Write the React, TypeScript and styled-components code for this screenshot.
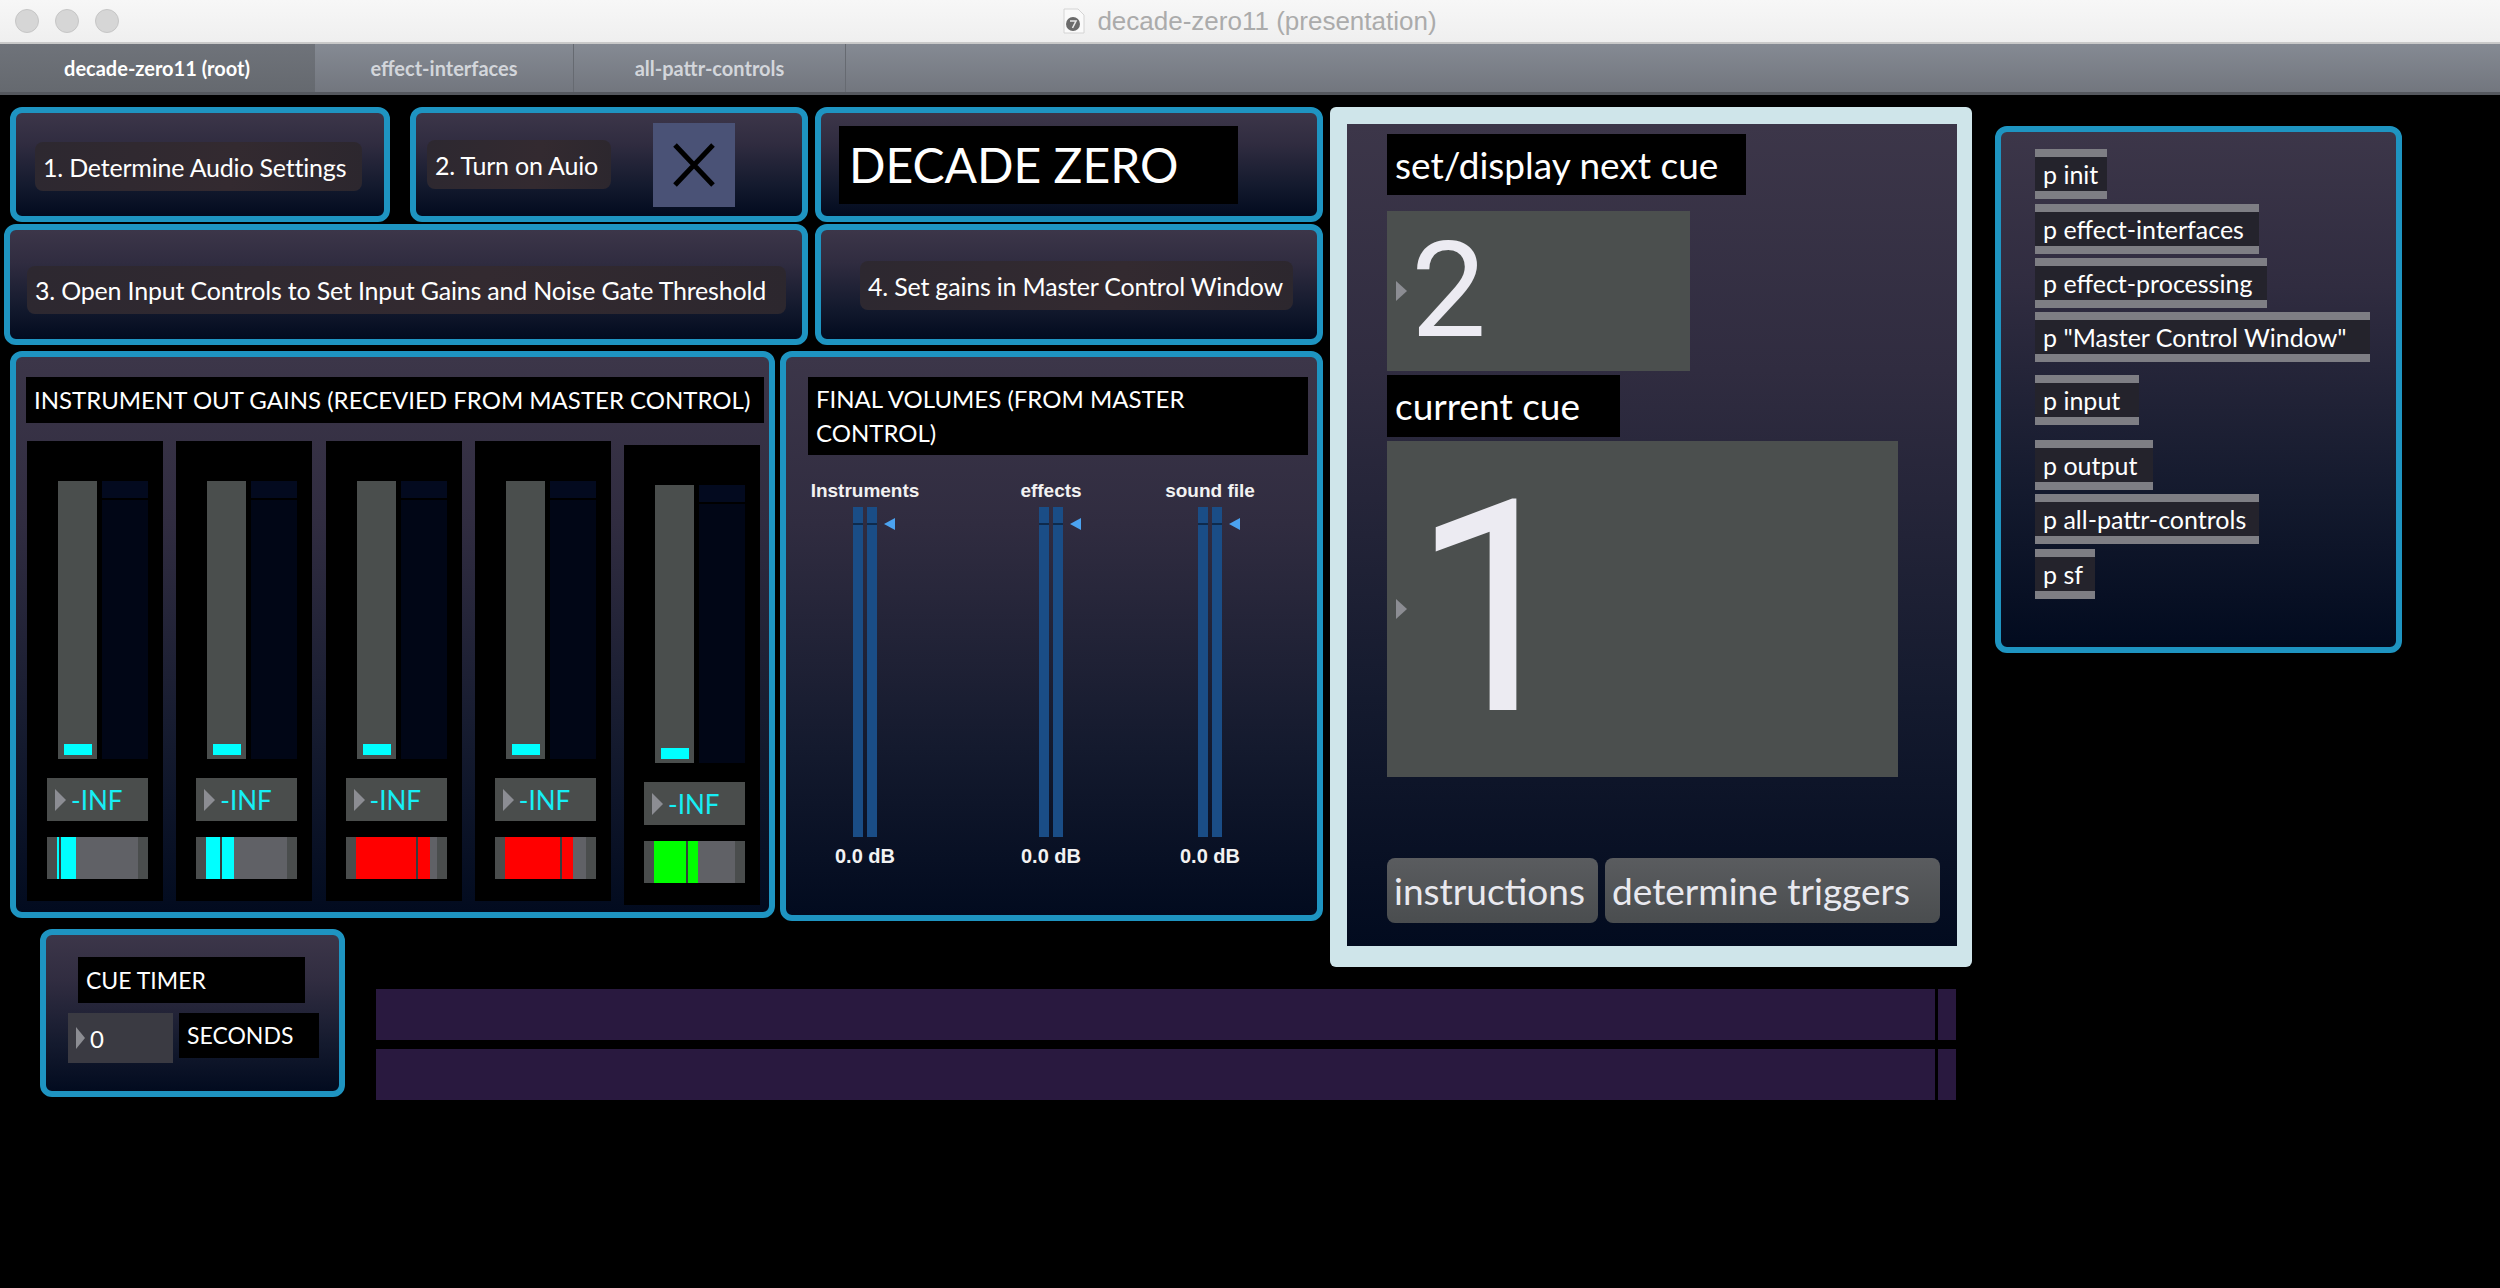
import React from 'react'
import styled, { createGlobalStyle } from 'styled-components'

const GlobalStyle = createGlobalStyle`
  html, body {
    margin: 0;
    padding: 0;
    background: #000;
  }
  body {
    font-family: 'Lato', 'Noto Sans', sans-serif;
  }
  #root {
    width: 2500px;
    height: 1288px;
    overflow: hidden;
  }
  * {
    box-sizing: border-box;
  }
`

const PANEL_BG = 'linear-gradient(180deg, #3c3649 0%, #302c40 30%, #141a2e 70%, #020b1f 100%)'
const PANEL_BORDER = '#1e94c1'

const Window = styled.div`
  width: 2500px;
  height: 1288px;
  display: flex;
  flex-direction: column;
  background: #000;
`

const TitleBar = styled.div`
  height: 44px;
  display: grid;
  grid-template-columns: 1fr auto 1fr;
  align-items: center;
  background: linear-gradient(180deg, #f7f7f7, #efefef);
  border-bottom: 2px solid #c9c9c9;
`

const Lights = styled.div`
  display: flex;
  gap: 16px;
  padding-left: 15px;
`

const Light = styled.span`
  width: 24px;
  height: 24px;
  border-radius: 50%;
  background: #d6d6d6;
  border: 1px solid #c6c6c6;
`

const WindowTitle = styled.div`
  display: flex;
  align-items: center;
  gap: 12px;
  font-family: 'Liberation Sans', Arial, sans-serif;
  font-size: 26px;
  color: #ababab;
`

const TabBar = styled.div`
  height: 51px;
  display: flex;
  background: linear-gradient(180deg, #858a93, #72767e);
  border-bottom: 3px solid #55585e;
`

const Tab = styled.div<{ $w: number; $active?: boolean }>`
  width: ${p => p.$w}px;
  display: flex;
  align-items: center;
  justify-content: center;
  font-size: 20px;
  font-weight: 700;
  color: ${p => (p.$active ? '#ffffff' : '#d3d6db')};
  background: ${p => (p.$active ? 'linear-gradient(180deg, #6f737a, #65696f)' : 'transparent')};
  border-right: 1px solid ${p => (p.$active ? 'transparent' : '#666a71')};
`

const Canvas = styled.div`
  flex: 1;
  display: grid;
  grid-template-columns: 376px 950px 650px 1fr;
  grid-template-rows: 822px auto;
  padding-top: 12px;
`

const TopLeft = styled.div`
  grid-column: 1 / 3;
  grid-row: 1;
  display: flex;
  flex-direction: column;
`

const Row = styled.div<{ $h?: number; $mt?: number }>`
  display: flex;
  align-items: flex-start;
  height: ${p => (p.$h ? `${p.$h}px` : 'auto')};
  margin-top: ${p => p.$mt ?? 0}px;
`

const Panel = styled.div<{ $w: number; $h?: number; $ml?: number; $pl?: number; $pt?: number }>`
  width: ${p => p.$w}px;
  height: ${p => (p.$h ? `${p.$h}px` : '100%')};
  margin-left: ${p => p.$ml ?? 0}px;
  padding-left: ${p => p.$pl ?? 0}px;
  padding-top: ${p => p.$pt ?? 0}px;
  border: 6px solid ${PANEL_BORDER};
  border-radius: 12px;
  background: ${PANEL_BG};
  display: flex;
  align-items: center;
`

const TextButton = styled.div<{ $w: number; $h?: number }>`
  width: ${p => p.$w}px;
  height: ${p => p.$h ?? 49}px;
  display: flex;
  align-items: center;
  padding-left: 8px;
  border-radius: 8px;
  background: linear-gradient(100deg, #2d2830 0%, #332a30 60%, #2c272e 100%);
  color: #fff;
  font-size: 25px;
  letter-spacing: -0.2px;
  white-space: nowrap;
`

const Toggle = styled.div`
  width: 82px;
  height: 84px;
  margin-left: 42px;
  background: #4a5276;
  display: flex;
  align-items: center;
  justify-content: center;
`

const TitleBox = styled.div`
  width: 399px;
  height: 78px;
  background: #000;
  color: #fff;
  font-size: 48px;
  display: flex;
  align-items: center;
  padding-left: 10px;
`

const Column = styled.div<{ $pl?: number; $pt?: number }>`
  width: 100%;
  height: 100%;
  display: flex;
  flex-direction: column;
  align-items: flex-start;
  padding-left: ${p => p.$pl ?? 0}px;
  padding-top: ${p => p.$pt ?? 0}px;
`

const Comment = styled.div<{ $w: number; $h: number; $size?: number; $ml?: number; $mt?: number }>`
  width: ${p => p.$w}px;
  height: ${p => p.$h}px;
  margin-left: ${p => p.$ml ?? 0}px;
  margin-top: ${p => p.$mt ?? 0}px;
  background: #000;
  color: #fff;
  font-size: ${p => p.$size ?? 24}px;
  line-height: 1.4;
  padding: 4px 8px;
  display: flex;
  align-items: center;
  flex-shrink: 0;
`

const StripRow = styled.div`
  width: 733px;
  margin-top: 18px;
  margin-left: 1px;
  display: flex;
  justify-content: space-between;
  align-items: flex-start;
`

const Strip = styled.div<{ $drop?: boolean }>`
  width: 136px;
  height: 460px;
  margin-top: ${p => (p.$drop ? 4 : 0)}px;
  background: #000;
  display: flex;
  flex-direction: column;
  padding-top: 40px;
`

const FaderRow = styled.div`
  display: flex;
  gap: 5px;
  padding-left: 31px;
`

const Track = styled.div`
  position: relative;
  width: 39px;
  height: 278px;
  background: #4a4e4d;
`

const Knob = styled.div`
  position: absolute;
  left: 6px;
  bottom: 4px;
  width: 28px;
  height: 11px;
  background: #00ffff;
`

const MeterWell = styled.div`
  width: 46px;
  height: 278px;
  background: #010616;
  border-top: 17px solid #030a1f;
  box-shadow: inset 0 2px 0 #000;
`

const NumBox = styled.div<{ $w: number; $h: number; $bg?: string; $ml?: number; $mt?: number; $color?: string; $size?: number }>`
  width: ${p => p.$w}px;
  height: ${p => p.$h}px;
  margin-left: ${p => p.$ml ?? 0}px;
  margin-top: ${p => p.$mt ?? 0}px;
  background: ${p => p.$bg ?? '#4a4d4c'};
  color: ${p => p.$color ?? '#fff'};
  font-size: ${p => p.$size ?? 23}px;
  display: flex;
  align-items: center;
  gap: 5px;
  padding-left: 8px;
  flex-shrink: 0;
`

const Arrow = styled.span<{ $w?: number; $h?: number }>`
  width: 0;
  height: 0;
  border-top: ${p => (p.$h ?? 22) / 2}px solid transparent;
  border-bottom: ${p => (p.$h ?? 22) / 2}px solid transparent;
  border-left: ${p => p.$w ?? 11}px solid #8c8d93;
  flex-shrink: 0;
`

const LevelBar = styled.div`
  width: 101px;
  height: 42px;
  margin-left: 20px;
  margin-top: 16px;
  background: #606166;
  border-left: 10px solid #4a4d4d;
  border-right: 10px solid #4a4d4d;
  display: flex;
`

const Fill = styled.div<{ $w: number; $c: string }>`
  width: ${p => p.$w}px;
  height: 100%;
  background: ${p => p.$c};
`

const FillLine = styled.div`
  width: 2px;
  height: 100%;
  background: rgba(40, 50, 50, 0.75);
`

const MetersRow = styled.div`
  display: grid;
  grid-template-columns: 158px 214px 104px;
  margin-top: 25px;
`

const MeterCol = styled.div`
  display: flex;
  flex-direction: column;
  align-items: center;
`

const MeterLabel = styled.div`
  font-family: 'Liberation Sans', Arial, sans-serif;
  font-weight: 700;
  font-size: 19px;
  line-height: 22px;
  color: #f2f2f2;
  white-space: nowrap;
`

const Bars = styled.div`
  position: relative;
  display: flex;
  gap: 4px;
  margin-top: 5px;
`

const Bar = styled.div`
  width: 10px;
  height: 330px;
  background: #1a4d86;
  border-top: 16px solid #1a4d86;
  box-shadow: inset 0 2px 0 #0e2a4c;
`

const Pointer = styled.span`
  position: absolute;
  left: 31px;
  top: 11px;
  width: 0;
  height: 0;
  border-top: 6px solid transparent;
  border-bottom: 6px solid transparent;
  border-right: 11px solid #4ba3f0;
`

const DbLabel = styled(MeterLabel)`
  font-size: 20px;
  margin-top: 8px;
`

const CueFrame = styled.div`
  grid-column: 3;
  grid-row: 1 / 3;
  align-self: start;
  width: 642px;
  height: 860px;
  margin-left: 4px;
  background: #cfe5ea;
  border-radius: 6px;
  padding: 17px 15px 21px 17px;
`

const CueInner = styled.div`
  width: 100%;
  height: 100%;
  background: ${PANEL_BG};
  display: flex;
  flex-direction: column;
  align-items: flex-start;
  padding: 10px 0 23px 40px;
`

const BigNum = styled.div<{ $w: number; $h: number; $mt: number; $size: number }>`
  width: ${p => p.$w}px;
  height: ${p => p.$h}px;
  margin-top: ${p => p.$mt}px;
  background: #4b4f4e;
  display: flex;
  align-items: center;
  padding-left: 9px;
  gap: 4px;
  color: #ecebf2;
  font-family: 'Roboto', 'Liberation Sans', Arial, sans-serif;
  font-size: ${p => p.$size}px;
  line-height: 1;
`

const CueButtons = styled.div`
  margin-top: auto;
  display: flex;
  gap: 7px;
`

const CueButton = styled.div<{ $w: number }>`
  width: ${p => p.$w}px;
  height: 65px;
  border-radius: 8px;
  background: linear-gradient(180deg, #5a5c5f, #4a4d4f);
  color: #e9e9ef;
  font-size: 37px;
  display: flex;
  align-items: center;
  padding-left: 7px;
  white-space: nowrap;
`

const ListPanel = styled.div`
  grid-column: 4;
  grid-row: 1;
  align-self: start;
  width: 407px;
  height: 527px;
  margin-top: 19px;
  margin-left: 19px;
  border: 6px solid ${PANEL_BORDER};
  border-radius: 12px;
  background: ${PANEL_BG};
  padding: 17px 0 0 34px;
  display: flex;
  flex-direction: column;
  align-items: flex-start;
`

const SubPatch = styled.div<{ $w: number; $mt: number }>`
  width: ${p => p.$w}px;
  height: 50px;
  margin-top: ${p => p.$mt}px;
  background: #24232c;
  border-top: 8px solid #7e7e84;
  border-bottom: 8px solid #7e7e84;
  color: #fff;
  font-size: 25px;
  display: flex;
  align-items: center;
  padding-left: 8px;
  white-space: nowrap;
  overflow: hidden;
`

const TimerPanel = styled.div`
  grid-column: 1;
  grid-row: 2;
  align-self: start;
  width: 305px;
  height: 168px;
  margin-left: 40px;
  border: 6px solid ${PANEL_BORDER};
  border-radius: 12px;
  background: ${PANEL_BG};
  padding: 22px 0 0 32px;
  display: flex;
  flex-direction: column;
  align-items: flex-start;
`

const TimerRow = styled.div`
  display: flex;
  align-items: flex-start;
  gap: 6px;
  margin-top: 10px;
  margin-left: -10px;
`

const Tracks = styled.div`
  grid-column: 2 / 4;
  grid-row: 2;
  align-self: start;
  width: 1580px;
  margin-top: 60px;
  display: flex;
  flex-direction: column;
  gap: 9px;
`

const TrackBar = styled.div`
  height: 51px;
  display: flex;
  background: #29193f;
`

const TrackMain = styled.div`
  flex: 1;
  border-right: 3px solid #000;
`

const TrackEnd = styled.div`
  width: 18px;
`

const strips = [
  { c: '#00ffff', a: 2, b: 15 },
  { c: '#00ffff', a: 14, b: 12 },
  { c: '#ff0000', a: 60, b: 12 },
  { c: '#ff0000', a: 55, b: 11 },
  { c: '#00ff00', a: 32, b: 10 },
]

const subpatches = [
  { name: 'p init', w: 72, mt: 0 },
  { name: 'p effect-interfaces', w: 224, mt: 5 },
  { name: 'p effect-processing', w: 232, mt: 4 },
  { name: 'p "Master Control Window"', w: 335, mt: 4 },
  { name: 'p input', w: 104, mt: 13 },
  { name: 'p output', w: 118, mt: 15 },
  { name: 'p all-pattr-controls', w: 224, mt: 4 },
  { name: 'p sf', w: 60, mt: 5 },
]

const meters = ['Instruments', 'effects', 'sound file']

const FileIcon = () => (
  <svg width="22" height="26" viewBox="0 0 22 26">
    <path d="M1 1h14l6 6v18H1z" fill="#fafafa" stroke="#d4d4d4" />
    <circle cx="10" cy="16" r="7" fill="#6b6b6b" />
    <path d="M7 13h6l-3.5 7" fill="none" stroke="#e8e8e8" strokeWidth="1.6" />
  </svg>
)

const Cross = () => (
  <svg width="44" height="46" viewBox="0 0 44 46">
    <path d="M3 3L41 43M41 3L3 43" stroke="#000" strokeWidth="5" />
  </svg>
)

export default function App() {
  return (
    <Window>
      <GlobalStyle />
      <TitleBar>
        <Lights>
          <Light />
          <Light />
          <Light />
        </Lights>
        <WindowTitle>
          <FileIcon />
          decade-zero11 (presentation)
        </WindowTitle>
        <div />
      </TitleBar>
      <TabBar>
        <Tab $w={315} $active>decade-zero11 (root)</Tab>
        <Tab $w={259}>effect-interfaces</Tab>
        <Tab $w={272}>all-pattr-controls</Tab>
      </TabBar>

      <Canvas>
        <TopLeft>
          <Row $h={115}>
            <Panel $w={380} $ml={10} $pl={19} $pt={4}>
              <TextButton $w={327}>1. Determine Audio Settings</TextButton>
            </Panel>
            <Panel $w={398} $ml={20} $pl={11}>
              <TextButton $w={184}>2. Turn on Auio</TextButton>
              <Toggle>
                <Cross />
              </Toggle>
            </Panel>
            <Panel $w={508} $ml={7} $pl={18}>
              <TitleBox>DECADE ZERO</TitleBox>
            </Panel>
          </Row>

          <Row $h={121} $mt={2}>
            <Panel $w={804} $ml={4} $pl={17} $pt={11}>
              <TextButton $w={759} $h={48}>3. Open Input Controls to Set Input Gains and Noise Gate Threshold</TextButton>
            </Panel>
            <Panel $w={508} $ml={7} $pl={39} $pt={2}>
              <TextButton $w={433}>4. Set gains in Master Control Window</TextButton>
            </Panel>
          </Row>

          <Row $mt={6}>
            <Panel $w={765} $h={567} $ml={10}>
              <Column $pl={10} $pt={20}>
                <Comment $w={738} $h={46} style={{ whiteSpace: 'nowrap' }}>
                  INSTRUMENT OUT GAINS (RECEVIED FROM MASTER CONTROL)
                </Comment>
                <StripRow>
                  {strips.map((s, i) => (
                    <Strip key={i} $drop={i === 4}>
                      <FaderRow>
                        <Track>
                          <Knob />
                        </Track>
                        <MeterWell />
                      </FaderRow>
                      <NumBox $w={101} $h={43} $ml={20} $mt={19} $color="#17eef5" $size={26}>
                        <Arrow />
                        -INF
                      </NumBox>
                      <LevelBar>
                        <Fill $w={s.a} $c={s.c} />
                        <FillLine />
                        <Fill $w={s.b} $c={s.c} />
                      </LevelBar>
                    </Strip>
                  ))}
                </StripRow>
              </Column>
            </Panel>
            <Panel $w={543} $h={570} $ml={5}>
              <Column $pt={20}>
                <Comment $w={500} $h={78} $ml={22}>FINAL VOLUMES (FROM MASTER CONTROL)</Comment>
                <MetersRow>
                  {meters.map(m => (
                    <MeterCol key={m}>
                      <MeterLabel>{m}</MeterLabel>
                      <Bars>
                        <Bar />
                        <Bar />
                        <Pointer />
                      </Bars>
                      <DbLabel>0.0 dB</DbLabel>
                    </MeterCol>
                  ))}
                </MetersRow>
              </Column>
            </Panel>
          </Row>
        </TopLeft>

        <CueFrame>
          <CueInner>
            <Comment $w={359} $h={61} $size={37}>set/display next cue</Comment>
            <BigNum $w={303} $h={160} $mt={16} $size={134}>
              <Arrow $w={11} $h={20} />
              <span>2</span>
            </BigNum>
            <Comment $w={233} $h={62} $size={37} $mt={4}>current cue</Comment>
            <BigNum $w={511} $h={336} $mt={4} $size={296}>
              <Arrow $w={11} $h={20} />
              <span>1</span>
            </BigNum>
            <CueButtons>
              <CueButton $w={211}>instructions</CueButton>
              <CueButton $w={335}>determine triggers</CueButton>
            </CueButtons>
          </CueInner>
        </CueFrame>

        <ListPanel>
          {subpatches.map(s => (
            <SubPatch key={s.name} $w={s.w} $mt={s.mt}>{s.name}</SubPatch>
          ))}
        </ListPanel>

        <TimerPanel>
          <Comment $w={227} $h={46} $size={23}>CUE TIMER</Comment>
          <TimerRow>
            <NumBox $w={105} $h={50} $bg="#3a3a42" $size={24}>
              <Arrow $w={9} $h={22} />
              0
            </NumBox>
            <Comment $w={140} $h={45} $size={23}>SECONDS</Comment>
          </TimerRow>
        </TimerPanel>

        <Tracks>
          <TrackBar>
            <TrackMain />
            <TrackEnd />
          </TrackBar>
          <TrackBar>
            <TrackMain />
            <TrackEnd />
          </TrackBar>
        </Tracks>
      </Canvas>
    </Window>
  )
}
